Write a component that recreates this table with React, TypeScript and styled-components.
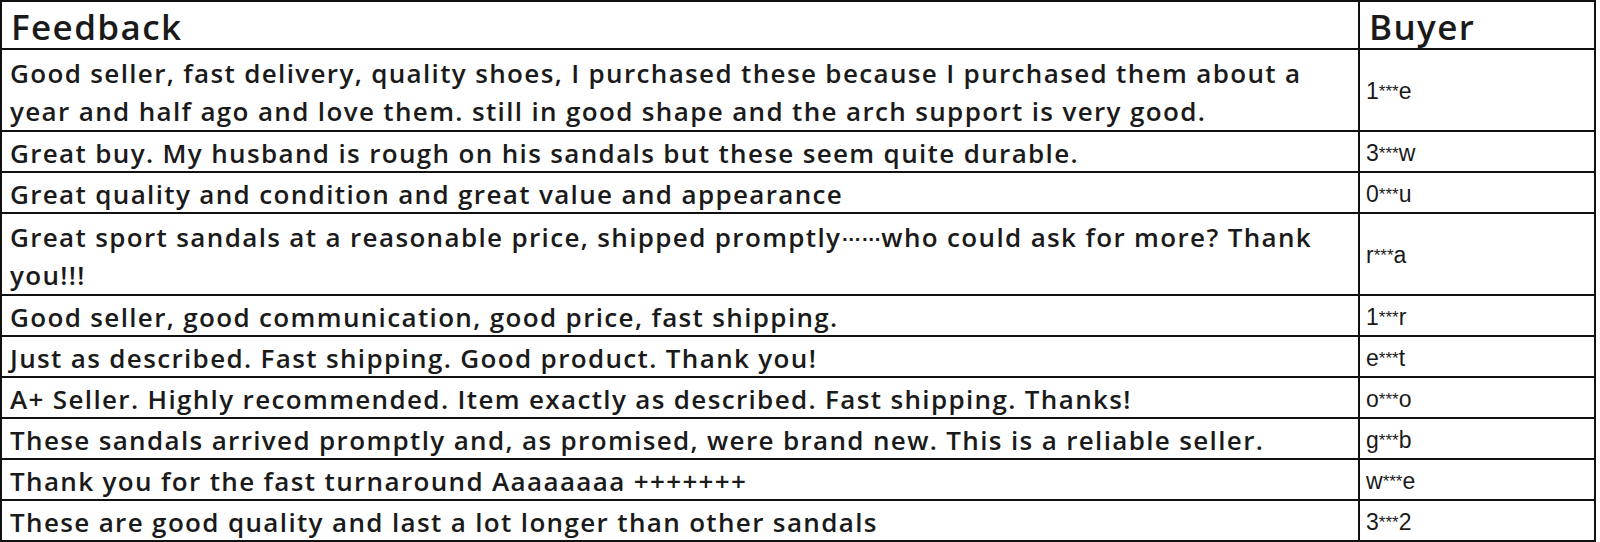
import React from "react";
import styled, { createGlobalStyle } from "styled-components";

const GlobalStyle = createGlobalStyle`
    html, body {
        margin: 0;
        padding: 0;
        background: #ffffff;
    }
`;

const Table = styled.table`
    width: 1596px;
    border-collapse: collapse;
    border: 2px solid #111;
    font-family: "Open Sans", "Noto Sans", sans-serif;
    color: #1a1a1a;
`;

const HeadCell = styled.th<{ $pad: number }>`
    border: 2px solid #111;
    padding: 4px 0 0 ${(p) => p.$pad}px;
    text-align: left;
    font-size: 35px;
    font-weight: 600;
    letter-spacing: 1.4px;
    line-height: 42px;
    height: 42px;
    box-sizing: content-box;
`;

const TextCell = styled.td<{ $lines: number }>`
    border: 2px solid #111;
    padding: 4px 0 0 8px;
    font-size: 26px;
    font-weight: 600;
    letter-spacing: 1.35px;
    line-height: ${(p) => (p.$lines > 1 ? 38 : 35)}px;
    vertical-align: middle;
    white-space: nowrap;
`;

const Dots = styled.span`
    font-family: "Liberation Sans", sans-serif;
    font-size: 20px;
    font-weight: 700;
    letter-spacing: 0;
    line-height: 0;
    vertical-align: 6px;
`;

const BuyerCell = styled.td`
    border: 2px solid #111;
    padding: 3px 0 0 6px;
    font-family: "Liberation Sans", Arial, sans-serif;
    font-size: 23px;
    line-height: 35px;
    vertical-align: middle;
    color: #1a1a1a;
`;

const Stars = styled.span`
    font-size: 17px;
    line-height: 0;
    vertical-align: 2px;
`;

type Row = { text: React.ReactNode[]; first: string; last: string };

const rows: Row[] = [
    {
        text: [
            "Good seller, fast delivery, quality shoes, I purchased these because I purchased them about a",
            "year and half ago and love them. still in good shape and the arch support is very good.",
        ],
        first: "1",
        last: "e",
    },
    { text: ["Great buy. My husband is rough on his sandals but these seem quite durable."], first: "3", last: "w" },
    { text: ["Great quality and condition and great value and appearance"], first: "0", last: "u" },
    {
        text: [
            <>
                Great sport sandals at a reasonable price, shipped promptly<Dots>……</Dots>who could ask for
                more? Thank
            </>,
            "you!!!",
        ],
        first: "r",
        last: "a",
    },
    { text: ["Good seller, good communication, good price, fast shipping."], first: "1", last: "r" },
    { text: ["Just as described. Fast shipping. Good product. Thank you!"], first: "e", last: "t" },
    {
        text: ["A+ Seller. Highly recommended. Item exactly as described. Fast shipping. Thanks!"],
        first: "o",
        last: "o",
    },
    {
        text: ["These sandals arrived promptly and, as promised, were brand new. This is a reliable seller."],
        first: "g",
        last: "b",
    },
    { text: ["Thank you for the fast turnaround Aaaaaaaa +++++++"], first: "w", last: "e" },
    { text: ["These are good quality and last a lot longer than other sandals"], first: "3", last: "2" },
];

export default function App() {
    return (
        <>
            <GlobalStyle />
            <Table>
                <colgroup>
                    <col style={{ width: 1358 }} />
                    <col />
                </colgroup>
                <thead>
                    <tr>
                        <HeadCell $pad={9}>Feedback</HeadCell>
                        <HeadCell $pad={9}>Buyer</HeadCell>
                    </tr>
                </thead>
                <tbody>
                    {rows.map((r, i) => (
                        <tr key={i}>
                            <TextCell $lines={r.text.length}>
                                {r.text.map((line, j) => (
                                    <React.Fragment key={j}>
                                        {j > 0 && <br />}
                                        {line}
                                    </React.Fragment>
                                ))}
                            </TextCell>
                            <BuyerCell>
                                {r.first}
                                <Stars>***</Stars>
                                {r.last}
                            </BuyerCell>
                        </tr>
                    ))}
                </tbody>
            </Table>
        </>
    );
}
